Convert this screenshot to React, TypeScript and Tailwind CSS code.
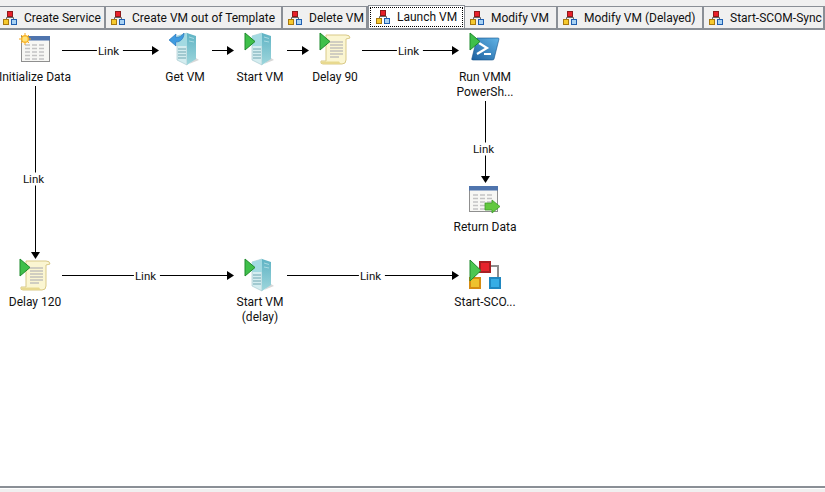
const font = { fontFamily: 'Roboto, "Noto Sans", sans-serif' };

function RunbookIcon() {
  return (
    <svg width="16" height="14" viewBox="0 0 16 14" className="shrink-0">
      <path d="M4.5 9V6.5H11.5V9M8 5V6.5" fill="none" stroke="#666" strokeWidth="1" />
      <rect x="5.5" y="0.5" width="5" height="5" fill="#e8202a" stroke="#8e1a1a" />
      <rect x="1.5" y="8.5" width="5" height="5" fill="#f5c92e" stroke="#a8780f" />
      <rect x="9.5" y="8.5" width="5" height="5" fill="#a8d2f4" stroke="#1f5fb0" />
    </svg>
  );
}

function Tab({ label, width, pad, active }: { label: string; width: string; pad: string; active?: boolean }) {
  if (active) {
    return (
      <div className={`${width} h-[23px] -mt-[2px] bg-white border border-[#8a8f96] border-b-0 p-[1px] shrink-0 relative z-10`}>
        <div className="h-full border border-dotted border-black flex items-center pl-[4px] pb-[1px] gap-[6px]">
          <RunbookIcon />
          <span className="text-[12px] leading-none whitespace-nowrap text-[#111]">{label}</span>
        </div>
      </div>
    );
  }
  return (
    <div className={`${width} ${pad} h-[21px] flex items-center gap-[6px] border-r-2 border-[#8a8f96] shrink-0 overflow-hidden`}>
      <RunbookIcon />
      <span className="text-[12px] leading-none whitespace-nowrap text-[#111]">{label}</span>
    </div>
  );
}

function Play() {
  return <path d="M1 1 L11 9.5 L1 18 Z" fill="#3fc04a" stroke="#1f8a2c" strokeWidth="1" />;
}

function Server({ play, back }: { play?: boolean; back?: boolean }) {
  return (
    <svg width="32" height="34" viewBox="0 0 32 34">
      <defs>
        <linearGradient id="srvSide" x1="0" y1="0" x2="0" y2="1">
          <stop offset="0" stopColor="#5fb3c4" />
          <stop offset="1" stopColor="#9ed6dc" />
        </linearGradient>
      </defs>
      <path d="M20 32 L30 28 L27 26 Z" fill="#d8d8d8" />
      <path d="M8 4 L18 1 L18 33 L8 28 Z" fill="#d4edf0" stroke="#9fc4cb" strokeWidth="0.6" />
      <path d="M8 4 L18 1 L18 14 L8 14 Z" fill="#a3dae2" />
      <path d="M18 1 L27 4 L27 27 L18 33 Z" fill="url(#srvSide)" />
      <path d="M20 5 L25 6.5 M20 9 L25 10" stroke="#a9dbe2" strokeWidth="1" />
      <path d="M9 17 H17 M9 20 H17 M9 23 H17 M9 26 H17" stroke="#6fa5b0" strokeWidth="1" />
      {play && <Play />}
      {back && (
        <path d="M15 1 C15 7 11 10 7 10 L7 14 L0 8 L7 2 L7 5.5 C10 5.5 13 4 15 1 Z" fill="#3f9be0" stroke="#1e6fb5" strokeWidth="0.6" />
      )}
    </svg>
  );
}

function Scroll() {
  return (
    <svg width="32" height="34" viewBox="0 0 32 34">
      <path d="M7 3 H27 Q31 3 31 6 L27 7 V28 Q27 32 23 32 H4 Q1 32 2 29 H7 Z" fill="#fbf6d2" stroke="#d9c987" strokeWidth="1" />
      <path d="M2 29.5 H20 Q21 31.5 23 32 H4 Q2 32 2 29.5 Z" fill="#e8d98f" />
      <path d="M11 10 H24 M11 13 H24 M11 16 H24 M11 19 H24 M11 22 H24 M11 25 H20" stroke="#a6a6b0" strokeWidth="1" />
      <Play />
    </svg>
  );
}

function Table({ star, out }: { star?: boolean; out?: boolean }) {
  return (
    <svg width="34" height="32" viewBox="0 0 34 32">
      <rect x="2.5" y="4.5" width="28" height="25" fill="#f7f7f4" stroke="#8f8f8f" />
      <rect x="2" y="4" width="29" height="4.5" fill="#4f74ad" />
      <path d="M6 13 H27 M6 16.5 H27 M6 20 H27 M6 23.5 H27 M6 27 H27" stroke="#c3c3c3" strokeWidth="1.4" strokeDasharray="5 2" />
      {star && (
        <g transform="translate(0 1)">
          <circle cx="6" cy="6" r="4" fill="#fbc02d" />
          <path d="M6 0 V12 M0 6 H12 M2 2 L10 10 M10 2 L2 10" stroke="#f5a623" strokeWidth="1" />
          <circle cx="6" cy="6" r="2.6" fill="#ffe27a" />
        </g>
      )}
      {out && <path d="M18 21 H25 V18 L33 24.5 L25 31 V28 H18 Z" fill="#62c83f" stroke="#3d9a2a" strokeWidth="0.8" />}
    </svg>
  );
}

function PowerShell() {
  return (
    <svg width="32" height="32" viewBox="0 0 32 32">
      <defs>
        <linearGradient id="psBox" x1="1" y1="0" x2="0" y2="1">
          <stop offset="0" stopColor="#62b4e6" />
          <stop offset="1" stopColor="#1b5f9f" />
        </linearGradient>
      </defs>
      <path d="M8 6 H29 Q30 6 30 7 L25 27 Q25 28 23 28 H4 Q2 28 3 26 Z" fill="url(#psBox)" stroke="#12508a" strokeWidth="0.6" />
      <path d="M10 11 L18 16 L8 22" fill="none" stroke="#fff" strokeWidth="2.2" />
      <path d="M15 22 H22" stroke="#fff" strokeWidth="2" />
      <Play />
    </svg>
  );
}

function Workflow() {
  return (
    <svg width="34" height="32" viewBox="0 0 34 32">
      <path d="M5 12 V19 M22 8 H29 V19" fill="none" stroke="#8d8d8d" strokeWidth="2" />
      <rect x="1" y="20" width="10" height="10" fill="#eec22d" stroke="#d68c12" strokeWidth="2" />
      <rect x="21" y="20" width="10" height="10" fill="#36ade5" stroke="#1f87c0" strokeWidth="2" />
      <rect x="11" y="4" width="10" height="10" fill="#e6242c" stroke="#a81f22" strokeWidth="2" />
      <path d="M1 2 L12 12.5 L1 23 Z" fill="#4cc752" stroke="#1f8a2c" strokeWidth="1" />
    </svg>
  );
}

const icons = [
  { x: 19, y: 32, el: <Table star /> },
  { x: 169, y: 32, el: <Server back /> },
  { x: 244, y: 32, el: <Server play /> },
  { x: 319, y: 32, el: <Scroll /> },
  { x: 469, y: 32, el: <PowerShell /> },
  { x: 467, y: 182, el: <Table out /> },
  { x: 19, y: 258, el: <Scroll /> },
  { x: 244, y: 258, el: <Server play /> },
  { x: 469, y: 258, el: <Workflow /> },
];

const labels = [
  { c: 35, y: 70, t: ['Initialize Data'] },
  { c: 185, y: 70, t: ['Get VM'] },
  { c: 260, y: 70, t: ['Start VM'] },
  { c: 335, y: 70, t: ['Delay 90'] },
  { c: 485, y: 70, t: ['Run VMM', 'PowerSh...'] },
  { c: 485, y: 220, t: ['Return Data'] },
  { c: 35, y: 295, t: ['Delay 120'] },
  { c: 260, y: 295, t: ['Start VM', '(delay)'] },
  { c: 485, y: 295, t: ['Start-SCO...'] },
];

const links = [
  { c: 110, y: 51 },
  { c: 410, y: 51 },
  { c: 35, y: 179 },
  { c: 485, y: 149 },
  { c: 147, y: 276 },
  { c: 372, y: 276 },
];

const hLines = [
  [62, 159, 50],
  [212, 234, 50],
  [287, 309, 50],
  [362, 459, 50],
  [62, 234, 275],
  [287, 459, 275],
];
const vLines = [
  [35, 86, 259],
  [485, 101, 183],
];

export default function App() {
  return (
    <div className="w-[825px] h-[492px] overflow-hidden flex flex-col bg-white" style={font}>
      <div className="h-[28px] bg-[#f0f0f0] pt-[7px] shrink-0">
        <div className="flex h-[21px] border-t border-b-2 border-[#8a8f96] box-content -mt-[1px]">
          <Tab label="Create Service" width="w-[106px]" pad="pl-[2px]" />
          <Tab label="Create VM out of Template" width="w-[177px]" pad="pl-[4px]" />
          <Tab label="Delete VM" width="w-[85px]" pad="pl-[4px]" />
          <Tab label="Launch VM" width="w-[97px]" pad="" active />
          <Tab label="Modify VM" width="w-[93px]" pad="pl-[4px]" />
          <Tab label="Modify VM (Delayed)" width="w-[146px]" pad="pl-[4px]" />
          <Tab label="Start-SCOM-Sync" width="w-[121px]" pad="pl-[4px]" />
        </div>
      </div>

      <div className="relative flex-1">
        <svg width="825" height="458" viewBox="0 28 825 458" className="absolute left-0 top-0">
          {hLines.map(([a, b, y]) => (
            <g key={`${a}-${y}`}>
              <path d={`M${a} ${y + 0.5} H${b - 6}`} stroke="#000" strokeWidth="1" />
              <path d={`M${b - 7} ${y - 4} L${b} ${y + 0.5} L${b - 7} ${y + 5} Z`} fill="#000" />
            </g>
          ))}
          {vLines.map(([x, a, b]) => (
            <g key={x}>
              <path d={`M${x + 0.5} ${a} V${b - 6}`} stroke="#000" strokeWidth="1" />
              <path d={`M${x - 4} ${b - 7} L${x + 0.5} ${b} L${x + 5} ${b - 7} Z`} fill="#000" />
            </g>
          ))}
        </svg>

        {links.map((l) => (
          <span
            key={`${l.c}-${l.y}`}
            className="absolute -translate-x-1/2 -translate-y-1/2 bg-white pl-[1px] pr-[4px] text-[11.5px] leading-[13px] text-[#111]"
            style={{ left: l.c, top: l.y - 28 }}
          >
            Link
          </span>
        ))}

        {icons.map((i) => (
          <div key={`${i.x}-${i.y}`} className="absolute" style={{ left: i.x, top: i.y - 28 }}>
            {i.el}
          </div>
        ))}

        {labels.map((l) => (
          <div
            key={`${l.c}-${l.y}`}
            className="absolute -translate-x-1/2 text-center text-[12px] leading-[15px] whitespace-nowrap text-[#111]"
            style={{ left: l.c, top: l.y - 28 }}
          >
            {l.t.map((t) => (
              <div key={t}>{t}</div>
            ))}
          </div>
        ))}
      </div>

      <div className="h-[6px] shrink-0 bg-[#f0f0f0] border-t-2 border-[#8a8f96]">
        <div className="h-[1px] bg-white" />
      </div>
    </div>
  );
}
